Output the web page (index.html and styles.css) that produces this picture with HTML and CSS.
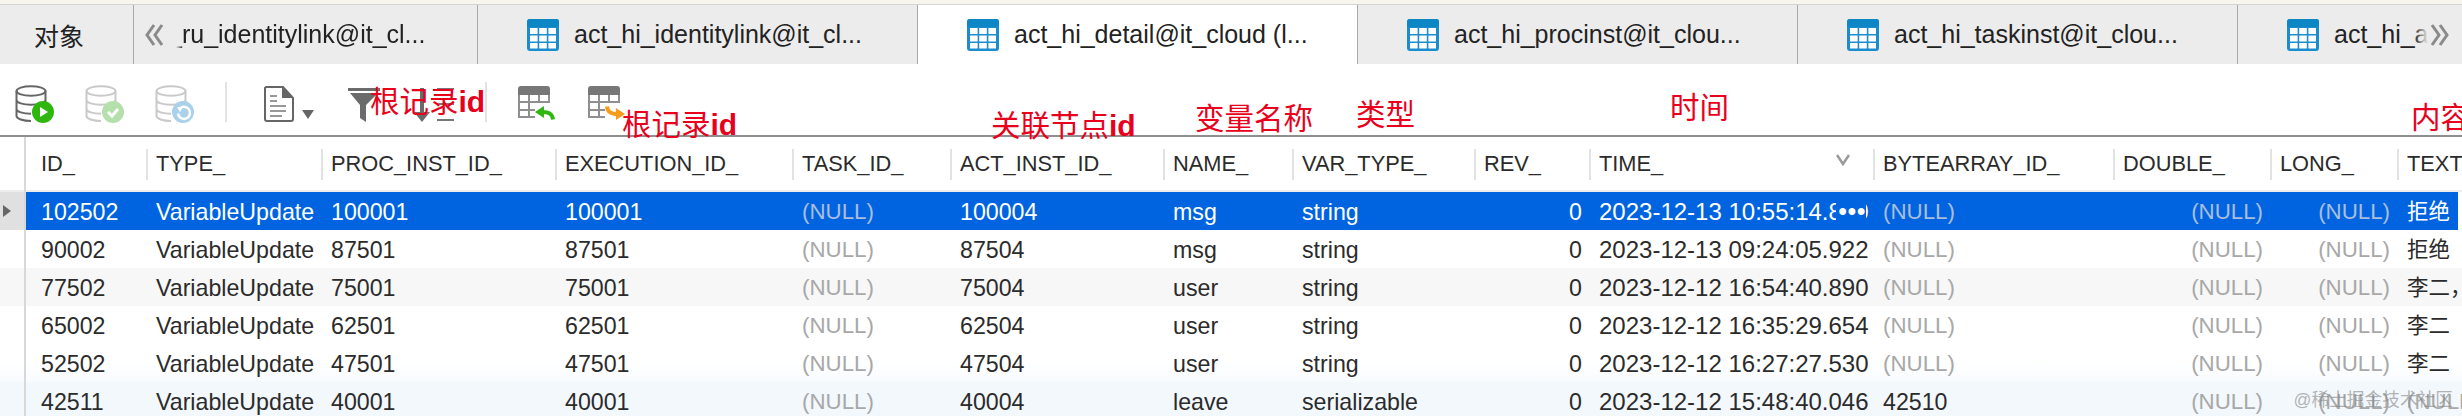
FILE: index.html
```html
<!DOCTYPE html>
<html lang="zh">
<head>
<meta charset="utf-8">
<title>act_hi_detail</title>
<link rel="stylesheet" href="styles.css">
</head>
<body>
<svg class="defs" width="0" height="0" aria-hidden="true">
  <symbol id="tbl" viewBox="0 0 32 32">
    <rect width="32" height="32" rx="3" fill="#1b8dcf"/>
    <rect width="32" height="8" rx="3" fill="#0d86c6"/>
    <g fill="#fff">
      <rect x="3" y="9" width="7.6" height="6"/><rect x="12.2" y="9" width="7.6" height="6"/><rect x="21.4" y="9" width="7.6" height="6"/>
      <rect x="3" y="16.5" width="7.6" height="6"/><rect x="12.2" y="16.5" width="7.6" height="6"/><rect x="21.4" y="16.5" width="7.6" height="6"/>
      <rect x="3" y="24" width="7.6" height="5.5"/><rect x="12.2" y="24" width="7.6" height="5.5"/><rect x="21.4" y="24" width="7.6" height="5.5"/>
    </g>
  </symbol>
  <symbol id="db" viewBox="0 0 32 38">
    <g fill="none" stroke="currentColor" stroke-width="2">
      <ellipse cx="16" cy="6" rx="14.5" ry="4.8"/>
      <path d="M1.5 6v25c0 2.8 6.5 5 14.5 5M30.5 6v14M1.5 15c0 2.6 6.5 4.8 14.5 4.8s14.5-2.2 14.5-4.8M1.5 24c0 2.6 6.5 4.8 14.5 4.8"/>
    </g>
  </symbol>
  <symbol id="gridg" viewBox="0 0 32 32">
    <path d="M3 0h26a3 3 0 0 1 3 3v6H0V3a3 3 0 0 1 3-3z" fill="#777"/>
    <path d="M1 9v22h16M31 9v8M11 9v22M21 9v8M1 16h30M1 24h16" fill="none" stroke="#8f8f8f" stroke-width="2"/>
  </symbol>
</svg>

<div class="notice"></div>

<nav class="tabs">
  <div class="tab tab-obj">对象</div>
  <div class="tab tab-scroll-l">
    <svg class="chev" viewBox="0 0 20 22"><path d="M10 1 3 11l7 10M18 1l-7 10 7 10" fill="none" stroke="#8a8a8a" stroke-width="3"/></svg>
    <span class="tab-name faded-l">_ru_identitylink@it_cl...</span>
  </div>
  <div class="tab"><svg class="tab-icon"><use href="#tbl"/></svg><span class="tab-name">act_hi_identitylink@it_cl...</span></div>
  <div class="tab tab-active"><svg class="tab-icon"><use href="#tbl"/></svg><span class="tab-name">act_hi_detail@it_cloud (l...</span></div>
  <div class="tab"><svg class="tab-icon"><use href="#tbl"/></svg><span class="tab-name">act_hi_procinst@it_clou...</span></div>
  <div class="tab"><svg class="tab-icon"><use href="#tbl"/></svg><span class="tab-name">act_hi_taskinst@it_clou...</span></div>
  <div class="tab tab-last"><svg class="tab-icon"><use href="#tbl"/></svg><span class="tab-name">act_hi_a</span>
    <div class="tab-more"><svg class="chev" viewBox="0 0 20 22"><path d="M2 1l7 10-7 10M10 1l7 10-7 10" fill="none" stroke="#8a8a8a" stroke-width="3"/></svg></div>
  </div>
</nav>

<section class="toolbar">
  <div class="tool tool-db">
    <svg class="db"><use href="#db"/></svg>
    <svg class="badge" viewBox="0 0 22 22"><circle cx="11" cy="11" r="11" fill="#2fb70f"/><path d="M8 6l8 5-8 5z" fill="#fff"/></svg>
  </div>
  <div class="tool tool-db off">
    <svg class="db"><use href="#db"/></svg>
    <svg class="badge" viewBox="0 0 22 22"><circle cx="11" cy="11" r="11" fill="#b4e1ab"/><path d="M6 11l4 4 6-7" fill="none" stroke="#fff" stroke-width="3"/></svg>
  </div>
  <div class="tool tool-db off">
    <svg class="db"><use href="#db"/></svg>
    <svg class="badge" viewBox="0 0 22 22"><circle cx="11" cy="11" r="11" fill="#aad0ea"/><path d="M7 8.5a6 6 0 1 1-1 4" fill="none" stroke="#fff" stroke-width="2.5"/><path d="M5 6l6 0-3 5z" fill="#fff"/></svg>
  </div>
  <div class="sep sep-a"></div>
  <svg class="doc" viewBox="0 0 30 36"><path d="M2 1h17l10 11v21a2 2 0 0 1-2 2H3a2 2 0 0 1-2-2V2z" fill="none" stroke="#666" stroke-width="2"/><path d="M18 1v11h11z" fill="#666"/><path d="M6 10h7M6 15h7M6 20h16M6 25h16M6 30h12" stroke="#777" stroke-width="1.5"/></svg>
  <svg class="caret" viewBox="0 0 12 9"><path d="M0 0h12L6 9z" fill="#666"/></svg>
  <svg class="filter" viewBox="0 0 32 34"><path d="M0 0h32v3H0zM2 5h28L18 17v17l-6-4V17z" fill="#6b6b6b"/></svg>
  <svg class="sort" viewBox="0 0 41 34"><path d="M7 0h4v24h6L9 34 1 24h6z" fill="#6b6b6b"/><path d="M24 1h17M24 16h17M24 32h17" stroke="#777" stroke-width="2"/></svg>
  <div class="sep sep-b"></div>
  <div class="tool tool-grid">
    <svg class="gridg"><use href="#gridg"/></svg>
    <svg class="arrow" viewBox="0 0 20 14"><path d="M18 13.5C17.5 8 14 6 7 6" fill="none" stroke="#2fb70f" stroke-width="4"/><path d="M9 0v12L0 6z" fill="#2fb70f"/></svg>
  </div>
  <div class="tool tool-grid tool-grid2">
    <svg class="gridg"><use href="#gridg"/></svg>
    <svg class="arrow" viewBox="0 0 20 14"><path d="M2 0.5C2.5 6 6 8 13 8" fill="none" stroke="#f59c1a" stroke-width="4"/><path d="M11 2v12l9-6z" fill="#f59c1a"/></svg>
  </div>

  <span class="note n1">根记录<b>id</b></span>
  <span class="note n2">根记录<b>id</b></span>
  <span class="note n3">关联节点<b>id</b></span>
  <span class="note n4">变量名称</span>
  <span class="note n5">类型</span>
  <span class="note n6">时间</span>
  <span class="note n7">内容</span>
</section>

<main class="data">
  <div class="row head">
    <div class="gutter"></div>
    <div class="c first">ID_</div><div class="c">TYPE_</div><div class="c">PROC_INST_ID_</div><div class="c">EXECUTION_ID_</div><div class="c">TASK_ID_</div><div class="c">ACT_INST_ID_</div><div class="c">NAME_</div><div class="c">VAR_TYPE_</div><div class="c">REV_</div>
    <div class="c time-h">TIME_<svg class="sortmark" viewBox="0 0 14 12"><path d="M1 1l6 9 6-9" fill="none" stroke="#9a9a9a" stroke-width="2.5"/></svg></div>
    <div class="c">BYTEARRAY_ID_</div><div class="c">DOUBLE_</div><div class="c">LONG_</div><div class="c last">TEXT_</div>
  </div>

  <div class="row sel">
    <div class="gutter"><svg class="marker" viewBox="0 0 8 12"><path d="M0 0l8 6-8 6z" fill="#666"/></svg></div>
    <div class="c first">102502</div><div class="c">VariableUpdate</div><div class="c">100001</div><div class="c">100001</div><div class="c nul">(NULL)</div><div class="c">100004</div><div class="c">msg</div><div class="c">string</div><div class="c num">0</div>
    <div class="c time">2023-12-13 10:55:14.830<span class="more">•••</span></div>
    <div class="c nul">(NULL)</div><div class="c nul num">(NULL)</div><div class="c nul num">(NULL)</div><div class="c last">拒绝</div>
  </div>
  <div class="row">
    <div class="gutter"></div>
    <div class="c first">90002</div><div class="c">VariableUpdate</div><div class="c">87501</div><div class="c">87501</div><div class="c nul">(NULL)</div><div class="c">87504</div><div class="c">msg</div><div class="c">string</div><div class="c num">0</div>
    <div class="c time">2023-12-13 09:24:05.922</div>
    <div class="c nul">(NULL)</div><div class="c nul num">(NULL)</div><div class="c nul num">(NULL)</div><div class="c last">拒绝</div>
  </div>
  <div class="row alt">
    <div class="gutter"></div>
    <div class="c first">77502</div><div class="c">VariableUpdate</div><div class="c">75001</div><div class="c">75001</div><div class="c nul">(NULL)</div><div class="c">75004</div><div class="c">user</div><div class="c">string</div><div class="c num">0</div>
    <div class="c time">2023-12-12 16:54:40.890</div>
    <div class="c nul">(NULL)</div><div class="c nul num">(NULL)</div><div class="c nul num">(NULL)</div><div class="c last">李二，王五</div>
  </div>
  <div class="row">
    <div class="gutter"></div>
    <div class="c first">65002</div><div class="c">VariableUpdate</div><div class="c">62501</div><div class="c">62501</div><div class="c nul">(NULL)</div><div class="c">62504</div><div class="c">user</div><div class="c">string</div><div class="c num">0</div>
    <div class="c time">2023-12-12 16:35:29.654</div>
    <div class="c nul">(NULL)</div><div class="c nul num">(NULL)</div><div class="c nul num">(NULL)</div><div class="c last">李二</div>
  </div>
  <div class="row fade">
    <div class="gutter"></div>
    <div class="c first">52502</div><div class="c">VariableUpdate</div><div class="c">47501</div><div class="c">47501</div><div class="c nul">(NULL)</div><div class="c">47504</div><div class="c">user</div><div class="c">string</div><div class="c num">0</div>
    <div class="c time">2023-12-12 16:27:27.530</div>
    <div class="c nul">(NULL)</div><div class="c nul num">(NULL)</div><div class="c nul num">(NULL)</div><div class="c last">李二</div>
  </div>
  <div class="row tint">
    <div class="gutter"></div>
    <div class="c first">42511</div><div class="c">VariableUpdate</div><div class="c">40001</div><div class="c">40001</div><div class="c nul">(NULL)</div><div class="c">40004</div><div class="c">leave</div><div class="c">serializable</div><div class="c num">0</div>
    <div class="c time">2023-12-12 15:48:40.046</div>
    <div class="c">42510</div><div class="c nul num">(NULL)</div><div class="c nul num">(NULL)</div><div class="c nul last">(NULL)</div>
  </div>
  <span class="mark">@稀土掘金技术社区</span>
</main>
</body>
</html>
```

FILE: styles.css
```css
* { box-sizing: border-box; }
html, body {
  margin: 0;
  width: 2462px;
  height: 416px;
  overflow: hidden;
  background: #fff;
  color: #2b2b2b;
  font-family: "Liberation Sans", "Noto Sans CJK SC", sans-serif;
}
.defs { position: absolute; }

.notice { height: 5px; background: #f8f6ec; border-bottom: 1px solid #d4d4d4; }

/* Tab bar */
.tabs { display: flex; height: 59px; background: #ececec; overflow: hidden; }
.tab {
  flex: 0 0 440px;
  display: flex;
  align-items: center;
  padding-left: 49px;
  gap: 15px;
  font-size: 25px;
  color: #222;
  border-right: 1px solid #a9a9a9;
  white-space: nowrap;
}
.tab-obj { flex-basis: 134px; padding-left: 34px; }
.tab-scroll-l { flex-basis: 344px; padding-left: 10px; gap: 4px; }
.tab-active { background: #fff; }
.tab-last { flex: 1 1 auto; border-right: 0; position: relative; }
.tab-icon { width: 32px; height: 32px; flex: none; }
.chev { width: 20px; height: 22px; flex: none; }
.faded-l { -webkit-mask-image: linear-gradient(to right, transparent 8px, #000 15px); mask-image: linear-gradient(to right, transparent 8px, #000 15px); }
.tab-more {
  position: absolute;
  right: 0;
  top: 0;
  bottom: 0;
  width: 48px;
  display: flex;
  align-items: center;
  background: linear-gradient(to right, rgba(236,236,236,0), #ececec 14px);
  padding-left: 16px;
}

/* Toolbar */
.toolbar {
  position: relative;
  height: 73px;
  display: flex;
  align-items: flex-start;
  border-bottom: 2px solid #8f8f8f;
}
.tool { position: relative; flex: none; }
.tool-db { width: 39px; height: 38px; color: #666; margin-top: 21px; margin-right: 31px; }
.tool-db:first-child { margin-left: 15px; }
.tool-db.off { color: #c9c9c9; }
.db { width: 32px; height: 38px; display: block; }
.badge { position: absolute; right: 0; bottom: 0; width: 22px; height: 22px; }
.sep { flex: none; width: 2px; height: 40px; background: #e2e2e2; margin-top: 18px; }
.doc { flex: none; width: 30px; height: 36px; margin: 22px 0 0 37px; }
.caret { flex: none; width: 12px; height: 9px; margin: 46px 0 0 8px; }
.filter { flex: none; width: 32px; height: 34px; margin: 24px 0 0 34px; }
.sort { flex: none; width: 41px; height: 34px; margin: 24px 0 0 33px; }
.sep-b { margin-left: 31px; }
.tool-grid { width: 36px; height: 34px; margin: 22px 0 0 31px; }
.tool-grid2 { margin-left: 34px; }
.gridg { width: 32px; height: 32px; display: block; }
.arrow { position: absolute; left: 17px; top: 20px; width: 20px; height: 14px; }

/* Red annotations drawn over the screenshot */
.note {
  position: absolute;
  z-index: 5;
  font-size: 29.5px;
  line-height: 34px;
  color: #e8001c;
  white-space: nowrap;
}
.note b { font-size: 30px; font-weight: 700; }
.n1 { left: 370px; top: 21px; }
.n2 { left: 622px; top: 44px; }
.n3 { left: 991px; top: 45px; }
.n4 { left: 1195px; top: 38px; }
.n5 { left: 1356px; top: 34px; }
.n6 { left: 1670px; top: 27px; }
.n7 { left: 2411px; top: 37px; }

/* Data grid */
.data { position: relative; }
.row {
  display: grid;
  grid-template-columns: 26px 122px 175px 234px 237px 158px 213px 129px 182px 115px 284px 240px 157px 127px 63px;
  height: 38px;
  font-size: 23.2px;
  line-height: 40px;
  white-space: nowrap;
}
.gutter { border-right: 2px solid #d8d8d8; display: flex; align-items: center; }
.c { padding: 0 9px 0 8px; overflow: hidden; min-width: 0; color: inherit; }
.c.first { padding-left: 15px; }
.c.last { padding-right: 0; font-size: 21.5px; }
.num { text-align: right; }
.nul { color: #a8a8a8; font-size: 22.3px; }
.c.nul.last { font-size: 22.3px; }
.time { font-size: 24px; }

.head { height: 53px; font-size: 21.8px; align-items: center; margin-bottom: 2px; box-shadow: 0 2px 0 #ededed; }
.head .gutter { height: 55px; align-self: start; }
.head .c { height: 31px; line-height: 30px; border-right: 2px solid #e2e2e2; }
.head .c.last { border-right: 0; font-size: 21.8px; }
.time-h { position: relative; }
.sortmark { position: absolute; right: 23px; top: 5px; width: 14px; height: 12px; }

.sel { background: #0064e1; color: #fff; margin-right: 4px; }
.sel .gutter { background: #e0e0e0; }
.sel .nul { color: #a9bddc; }
.marker { width: 8px; height: 12px; margin-left: 3px; }
.time { position: relative; }
.more {
  position: absolute;
  right: 9px;
  top: 0;
  width: 30px;
  text-align: right;
  background: #0064e1;
  font-size: 25px;
  line-height: 38px;
  letter-spacing: 0.5px;
}
.alt { background: #f7f7f7; }
.fade { background: linear-gradient(#fff 40%, #f8fbfe); }
.tint { background: #f3f8fd; }
.mark {
  position: absolute;
  right: 9px;
  top: 253px;
  font-size: 17.7px;
  line-height: 20px;
  color: rgba(130,130,130,.6);
}
```
